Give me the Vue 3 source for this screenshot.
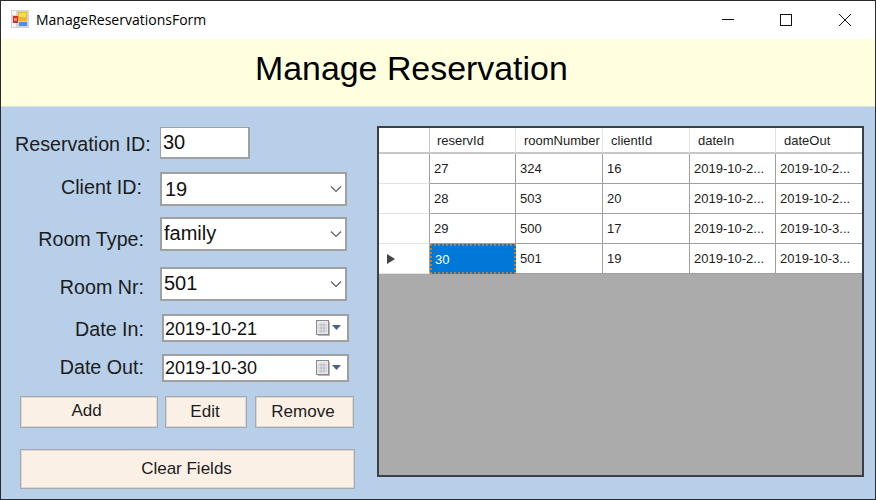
<script setup>
const columns = ['reservId', 'roomNumber', 'clientId', 'dateIn', 'dateOut']
const rows = [
  { values: ['27', '324', '16', '2019-10-2...', '2019-10-2...'] },
  { values: ['28', '503', '20', '2019-10-2...', '2019-10-2...'] },
  { values: ['29', '500', '17', '2019-10-2...', '2019-10-3...'] },
  { values: ['30', '501', '19', '2019-10-2...', '2019-10-3...'], current: true }
]
</script>

<template>
  <div class="window">
    <header class="titlebar">
      <svg class="app-icon" width="18" height="18" viewBox="0 0 18 18">
        <rect x="0" y="0" width="18" height="18" fill="#d4d4d4" />
        <rect x="1" y="1" width="4" height="4" fill="#f4f4f4" />
        <rect x="1" y="13" width="4" height="4" fill="#f4f4f4" />
        <rect x="2" y="6" width="5" height="7" fill="#c9302c" />
        <rect x="3" y="8" width="3" height="3" fill="#e88a80" />
        <rect x="7" y="2" width="9" height="9" fill="#f3b51c" />
        <rect x="8" y="3" width="7" height="4" fill="#fbd863" />
        <rect x="8" y="12" width="8" height="4" fill="#4f8fdc" />
      </svg>
      <span class="title-text">ManageReservationsForm</span>
      <div class="controls">
        <svg width="14" height="14" viewBox="0 0 14 14" class="ctl-min"><path d="M1 6.5H13" stroke="#111" fill="none" /></svg>
        <svg width="14" height="14" viewBox="0 0 14 14" class="ctl-max"><rect x="1.5" y="1.5" width="11" height="11" stroke="#111" fill="none" /></svg>
        <svg width="14" height="14" viewBox="0 0 14 14" class="ctl-close"><path d="M1 1L13 13M13 1L1 13" stroke="#111" fill="none" /></svg>
      </div>
    </header>

    <div class="banner"><h1>Manage Reservation</h1></div>

    <main class="content">
      <section class="form">
        <div class="row row-id">
          <label class="lbl lbl-id">Reservation ID:</label>
          <div class="field field-id">30</div>
        </div>
        <div class="row row-client">
          <label class="lbl lbl-client">Client ID:</label>
          <div class="field combo"><span class="val-low">19</span>
            <svg width="12" height="8" viewBox="0 0 12 8"><path d="M1 1.5L6 6.5L11 1.5" stroke="#606060" stroke-width="1.2" fill="none" /></svg>
          </div>
        </div>
        <div class="row row-type">
          <label class="lbl lbl-type">Room Type:</label>
          <div class="field combo"><span>family</span>
            <svg width="12" height="8" viewBox="0 0 12 8"><path d="M1 1.5L6 6.5L11 1.5" stroke="#606060" stroke-width="1.2" fill="none" /></svg>
          </div>
        </div>
        <div class="row row-nr">
          <label class="lbl lbl-type">Room Nr:</label>
          <div class="field combo"><span>501</span>
            <svg width="12" height="8" viewBox="0 0 12 8"><path d="M1 1.5L6 6.5L11 1.5" stroke="#606060" stroke-width="1.2" fill="none" /></svg>
          </div>
        </div>
        <div class="row row-in">
          <label class="lbl lbl-date">Date In:</label>
          <div class="field date"><span class="val-in">2019-10-21</span>
            <svg width="26" height="16" viewBox="0 0 26 16">
              <rect x="2" y="2" width="12" height="14" fill="#b9b6b2" />
              <rect x="0.5" y="0.5" width="12" height="14" fill="#e6e8ec" stroke="#8a8a8a" />
              <path d="M2 5H11M2 8H11M2 11H11M5 3V13M8 3V13" stroke="#b9bdc6" fill="none" />
              <path d="M16 5H25L20.5 10Z" fill="#4c5f8a" />
            </svg>
          </div>
        </div>
        <div class="row row-out">
          <label class="lbl lbl-date-out">Date Out:</label>
          <div class="field date"><span>2019-10-30</span>
            <svg width="26" height="16" viewBox="0 0 26 16">
              <rect x="2" y="2" width="12" height="14" fill="#b9b6b2" />
              <rect x="0.5" y="0.5" width="12" height="14" fill="#e6e8ec" stroke="#8a8a8a" />
              <path d="M2 5H11M2 8H11M2 11H11M5 3V13M8 3V13" stroke="#b9bdc6" fill="none" />
              <path d="M16 5H25L20.5 10Z" fill="#4c5f8a" />
            </svg>
          </div>
        </div>
        <div class="actions">
          <button class="btn btn-add">Add</button>
          <button class="btn btn-edit">Edit</button>
          <button class="btn btn-remove">Remove</button>
        </div>
        <button class="btn btn-clear">Clear Fields</button>
      </section>

      <section class="grid">
        <div class="grid-row head">
          <div class="cell side"></div>
          <div v-for="c in columns" :key="c" class="cell">{{ c }}</div>
        </div>
        <div v-for="row in rows" :key="row.values[0]" class="grid-row body-row">
          <div class="cell side"><span v-if="row.current" class="arrow"></span></div>
          <div
            v-for="(v, i) in row.values"
            :key="i"
            class="cell"
            :class="{ selected: row.current && i === 0 }"
          >{{ v }}</div>
        </div>
      </section>
    </main>
  </div>
</template>

<style>
html, body { margin: 0; padding: 0; background: #b8cfe9; }
</style>

<style scoped>
.window {
  width: 876px;
  height: 500px;
  box-sizing: border-box;
  border: 1px solid #2b2b2b;
  display: flex;
  flex-direction: column;
  background: #b8cfe9;
  overflow: hidden;
  font-family: "Liberation Sans", Arial, sans-serif;
  color: #111;
}
.titlebar {
  height: 38px;
  flex: none;
  background: #fff;
  display: flex;
  align-items: center;
  padding-left: 10px;
}
.app-icon { flex: none; margin-right: 7px; margin-top: -2px; }
.title-text {
  font-family: "Open Sans", sans-serif;
  font-size: 14px;
  color: #000;
  margin-top: -1px;
}
.controls { margin-left: auto; display: flex; align-items: center; margin-top: -1px; padding-right: 23px; }
.ctl-max { margin-left: 44px; }
.ctl-close { margin-left: 45px; }
.banner {
  height: 68px;
  flex: none;
  box-sizing: border-box;
  background: #ffffe0;
  border-bottom: 1px solid #dfe3d8;
  padding-left: 254px;
}
.banner h1 {
  margin: 0;
  font-weight: 400;
  font-size: 33.9px;
  line-height: 59px;
  color: #000;
}
.content { flex: 1; display: flex; min-height: 0; }
.form { width: 376px; flex: none; box-sizing: border-box; padding-top: 20px; }
.row { display: flex; justify-content: flex-end; padding-right: 30px; }
.row-id { justify-content: flex-start; padding: 0 0 0 159px; position: relative; }
.row-client { margin-top: 13px; }
.row-type { margin-top: 11px; }
.row-nr { margin-top: 16px; }
.row-in { margin-top: 13px; padding-right: 28px; }
.row-out { margin-top: 12px; padding-right: 28px; }
.lbl { font-size: 19.7px; line-height: 24px; white-space: nowrap; color: #1c1c1c; }
.row-id .lbl { position: absolute; left: 14px; top: 5px; }
.lbl-client { margin-right: 18px; padding-top: 3px; }
.lbl-type { margin-right: 16px; padding-top: 10px; }
.row-nr .lbl-type { padding-top: 8px; }
.lbl-date { margin-right: 18px; padding-top: 3px; }
.lbl-date-out { margin-right: 18px; padding-top: 1px; }
.field {
  box-sizing: border-box;
  background: #fff;
  border: 2px solid #a0a0a0;
  font-size: 20px;
  color: #111;
  display: flex;
  align-items: center;
}
.field-id { width: 90px; height: 32px; padding-left: 2px; border-width: 1px 2px 2px 1px; }
.combo {
  width: 187px;
  height: 34px;
  padding: 0 3px 0 2px;
  justify-content: space-between;
}
.combo span { margin-top: -1px; }
.combo .val-low { margin-top: 1px; margin-left: 1px; }
.date {
  width: 187px;
  height: 28px;
  padding: 0 5px 0 1px;
  justify-content: space-between;
  font-size: 18px;
}
.date .val-in { margin-top: 2px; }
.actions { display: flex; margin: 14px 0 0 19px; }
.btn {
  box-sizing: border-box;
  font-family: inherit;
  font-size: 17px;
  color: #1c1c1c;
  background: #faf0e6;
  border: 1px solid #a9a9a9;
  box-shadow: inset 0 0 0 1px #dcd9d4;
  padding: 0;
  height: 32px;
}
.btn-add { width: 138px; padding: 0 5px 3px 0; }
.btn-edit { width: 82px; margin-left: 7px; padding-right: 2px; }
.btn-remove { width: 99px; margin-left: 8px; padding-right: 3px; }
.btn-clear { display: block; width: 335px; height: 40px; margin: 21px 0 0 19px; padding-right: 2px; }
.grid {
  width: 487px;
  height: 351px;
  box-sizing: border-box;
  margin-top: 19px;
  border: 2px solid #3c4046;
  background: #ababab;
  font-size: 13px;
  overflow: hidden;
}
.grid-row {
  display: grid;
  grid-template-columns: 51px 86px 87px 87px 86px 86px;
  background: #fff;
}
.head { height: 26px; }
.body-row { height: 30px; }
.cell {
  box-sizing: border-box;
  border-right: 1px solid #a0a0a0;
  border-bottom: 1px solid #a0a0a0;
  display: flex;
  align-items: center;
  padding-left: 4px;
  white-space: nowrap;
  overflow: hidden;
  color: #1c1c1c;
}
.cell:last-child { border-right: none; }
.head .cell {
  padding-left: 8px;
  padding-top: 1px;
  border-right-color: #e2e2e2;
  border-bottom: 2px solid #c8c8c8;
  height: 26px;
}
.head .cell:nth-child(2) { padding-left: 7px; }
.side { border-right-color: #a0a0a0 !important; border-bottom-color: #e2e2e2; padding-left: 8px; }
.head .side { border-right-color: #c8c8c8 !important; }
.selected {
  background: #0078d7;
  color: #fff;
  border: 2px dotted #c97a26;
  padding-left: 3px;
}
.arrow {
  width: 0;
  height: 0;
  border-left: 8px solid #444;
  border-top: 5.5px solid transparent;
  border-bottom: 5.5px solid transparent;
}
</style>
